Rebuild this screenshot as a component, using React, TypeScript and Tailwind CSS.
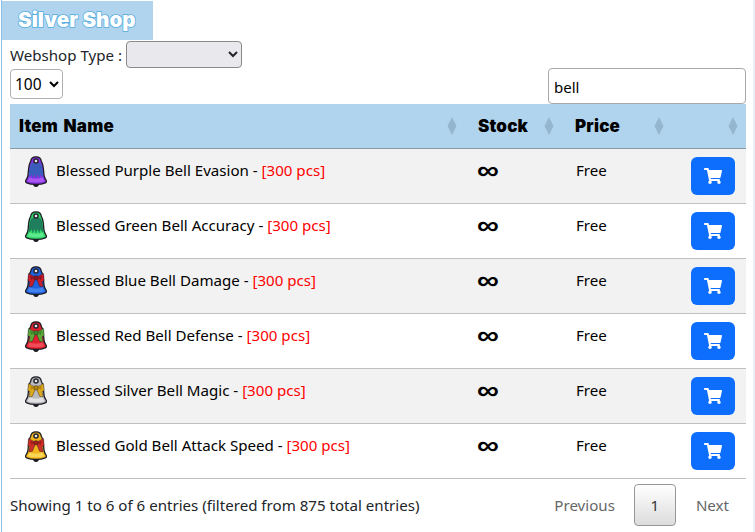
import React from 'react';
import { FaShoppingCart } from 'react-icons/fa';

type BellProps = { body: string; light: string; dark: string; ribbon: string; ribbon2: string; bow?: boolean };

function Bell({ body, light, dark, ribbon, ribbon2, bow }: BellProps) {
  return (
    <svg width="22" height="32" viewBox="0 0 22 32" className="block">
      <path d="M11 31a3 3 0 0 0 3-3.500H8a3 3 0 0 0 3 3.500z" fill="#1c1c24" />
      <path
        d="M11 .8C14 .8 16 2.500 16.200 5 17.500 7 18 9 18.300 12L19 19C19.200 21 20 22.500 21 24 21.800 25.300 21.400 26.300 20.300 26.800 17.800 28 14.800 28.400 11 28.400 7.200 28.400 4.200 28 1.700 26.800.6 26.300.2 25.300 1 24 2 22.500 2.800 21 3 19L3.700 12C4 9 4.500 7 5.800 5 6 2.500 8 .8 11 .8z"
        fill={body}
        stroke="#1c1c24"
        strokeWidth="1.300"
      />
      <path d="M2.500 25.200C7 26.800 15 26.800 19.500 25.200 18.500 23.800 18 22.500 17.700 21 14 23 8 23 4.300 21 4 22.500 3.500 23.800 2.500 25.200z" fill={light} opacity="0.75" />
      <path d="M4.800 13L4.300 19.500 6 20 6.500 11z" fill={dark} opacity="0.6" />
      {bow ? (
        <g stroke="#1c1c24" strokeWidth="0.400">
          <path d="M11 11.500L3.500 7.500 2.800 14.500 5 15.800 3.800 21 7.500 20.200 9.800 14.500z" fill={ribbon} />
          <path d="M11 11.500L18.500 7.500 19.200 14.500 17 15.800 18.200 21 14.500 20.200 12.200 14.500z" fill={ribbon} />
          <path d="M5 9.500L9.500 11.800 6 14zM17 9.500L12.500 11.800 16 14z" fill={ribbon2} stroke="none" />
          <rect x="9" y="9.800" width="4" height="4" rx="1" fill={ribbon2} />
        </g>
      ) : (
        <path
          d="M6.200 7.500C9 5.800 13 5.800 15.800 7.500 17 9.500 17.700 13 18.200 18.500L17.500 22 15.500 18 14.300 22.500 12.500 18 11 23 9.500 18 7.700 22.500 6.500 18 4.500 22 3.800 18.500C4.300 13 5 9.500 6.200 7.500z"
          fill={ribbon}
        />
      )}
      <circle cx="11" cy="5" r="2.800" fill="#26262e" />
      <circle cx="11" cy="5" r="1.300" fill="#e6e6ee" />
    </svg>
  );
}

const items: { name: string; pcs: string; bell: BellProps }[] = [
  { name: 'Blessed Purple Bell Evasion', pcs: '[300 pcs]', bell: { body: '#8a2fe6', light: '#b566f5', dark: '#5a189a', ribbon: '#3a5cba', ribbon2: '#2b4aa0' } },
  { name: 'Blessed Green Bell Accuracy', pcs: '[300 pcs]', bell: { body: '#2fd868', light: '#6cee98', dark: '#15924a', ribbon: '#1f7f5c', ribbon2: '#166a4c' } },
  { name: 'Blessed Blue Bell Damage', pcs: '[300 pcs]', bell: { body: '#1f62e0', light: '#4f8ef2', dark: '#123f9e', ribbon: '#c81e2c', ribbon2: '#8f1420', bow: true } },
  { name: 'Blessed Red Bell Defense', pcs: '[300 pcs]', bell: { body: '#e0202e', light: '#f55a66', dark: '#9c1420', ribbon: '#5fa83a', ribbon2: '#3f8a2a', bow: true } },
  { name: 'Blessed Silver Bell Magic', pcs: '[300 pcs]', bell: { body: '#bcbcc0', light: '#efeff1', dark: '#77777c', ribbon: '#dca81c', ribbon2: '#b8860f', bow: true } },
  { name: 'Blessed Gold Bell Attack Speed', pcs: '[300 pcs]', bell: { body: '#f2b61a', light: '#fde26a', dark: '#b57f0c', ribbon: '#cf2f28', ribbon2: '#a51f1a', bow: true } },
];

function SortIcon() {
  return (
    <svg width="10" height="18" viewBox="0 0 10 18" className="block">
      <path d="M5 0L9.500 9 5 18 .5 9z" fill="#94b6ce" />
    </svg>
  );
}

function HeadCell({ label, className, iconPad }: { label: string; className: string; iconPad: string }) {
  return (
    <th className={className}>
      <div className={`flex items-center justify-between pl-[9px] ${iconPad}`}>
        <span className="pt-[2px] font-['Inter',sans-serif] text-[17px] font-black tracking-[0.2px] text-black [word-spacing:2px]">{label}</span>
        <SortIcon />
      </div>
    </th>
  );
}

export default function App() {
  return (
    <div className="h-[532px] w-[755px] overflow-hidden border-r-2 border-[#e8f1f9] bg-white font-['Noto_Sans',sans-serif] text-[15.1px] text-[#212529]">
      <div className="ml-px h-full w-[749px] border-l border-[#8fc0e6] pt-px">
        <div className="flex h-[39px] w-[151px] items-center bg-[#b0d4ee] pl-4">
          <h1 className="font-['Inter',sans-serif] text-[20.600px] font-black leading-none text-white [-webkit-text-stroke:1.500px_#52ace0] [paint-order:stroke_fill]">
            Silver Shop
          </h1>
        </div>

        <div className="flex h-[29px] items-center pl-2">
          <label htmlFor="type" className="mr-[4px] pt-[2px]">Webshop Type :</label>
          <select id="type" className="h-[27px] w-[116px] rounded border border-[#8a8a8a] bg-[#e9e9ed]" />
        </div>

        <div className="flex items-start justify-between pl-2 pr-[4px]">
          <select className="h-[30px] w-[53px] rounded border border-[#b0b0b0] bg-white text-[15.500px] text-black">
            <option>100</option>
          </select>
          <input
            readOnly
            value="bell"
            className="mt-[-1px] h-[36px] w-[198px] rounded border border-[#a8a8a8] bg-white px-[5px] pt-[2px] text-[15px] text-black outline-none"
          />
        </div>

        <table className="ml-2 w-[736px] table-fixed border-collapse">
          <thead>
            <tr className="h-[44px] border-b border-[#8a99a6] bg-[#b0d4ee]">
              <HeadCell label="Item Name" className="w-[459px]" iconPad="pr-[12px]" />
              <HeadCell label="Stock" className="w-[97px]" iconPad="pr-[12px]" />
              <HeadCell label="Price" className="w-[115px]" iconPad="pr-[17px]" />
              <HeadCell label="" className="w-[65px]" iconPad="pr-[8px]" />
            </tr>
          </thead>
          <tbody>
            {items.map((item, i) => (
              <tr key={item.name} className={`h-[55px] border-b border-[#c0c0c0] ${i % 2 === 0 ? 'bg-[#f2f2f2]' : 'bg-white'}`}>
                <td className="pl-[15px] align-top">
                  <div className="flex items-start pt-[7px]">
                    <Bell {...item.bell} />
                    <span className="ml-[9px] mt-[3px] text-black">
                      {item.name} - <span className="text-[#ff0000]">{item.pcs}</span>
                    </span>
                  </div>
                </td>
                <td className="pl-[8px] align-top">
                  <span className="block origin-left scale-x-[1.18] pt-[3px] font-['Liberation_Sans',sans-serif] text-[26px] font-bold leading-[36px] text-black">∞</span>
                </td>
                <td className="pl-[10px] pt-[10px] align-top text-black">Free</td>
                <td className="pl-[10px] align-top">
                  <button className="mt-2 flex h-[38px] w-[44px] items-center justify-center rounded-md bg-[#0d6efd] text-white">
                    <FaShoppingCart size={18} />
                  </button>
                </td>
              </tr>
            ))}
          </tbody>
        </table>

        <div className="mt-[1px] flex items-center justify-between pl-2 pr-[21px] pt-[4px]">
          <span className="pt-[2px]">Showing 1 to 6 of 6 entries (filtered from 875 total entries)</span>
          <div className="flex items-center text-[#666]">
            <span className="mr-[19px] pt-[2px]">Previous</span>
            <span className="flex h-[42px] w-[42px] items-center justify-center rounded-sm border border-[#979797] bg-gradient-to-b from-white to-[#dcdcdc] pt-[2px] text-[#333]">1</span>
            <span className="ml-[20px] pt-[2px]">Next</span>
          </div>
        </div>
      </div>
    </div>
  );
}
